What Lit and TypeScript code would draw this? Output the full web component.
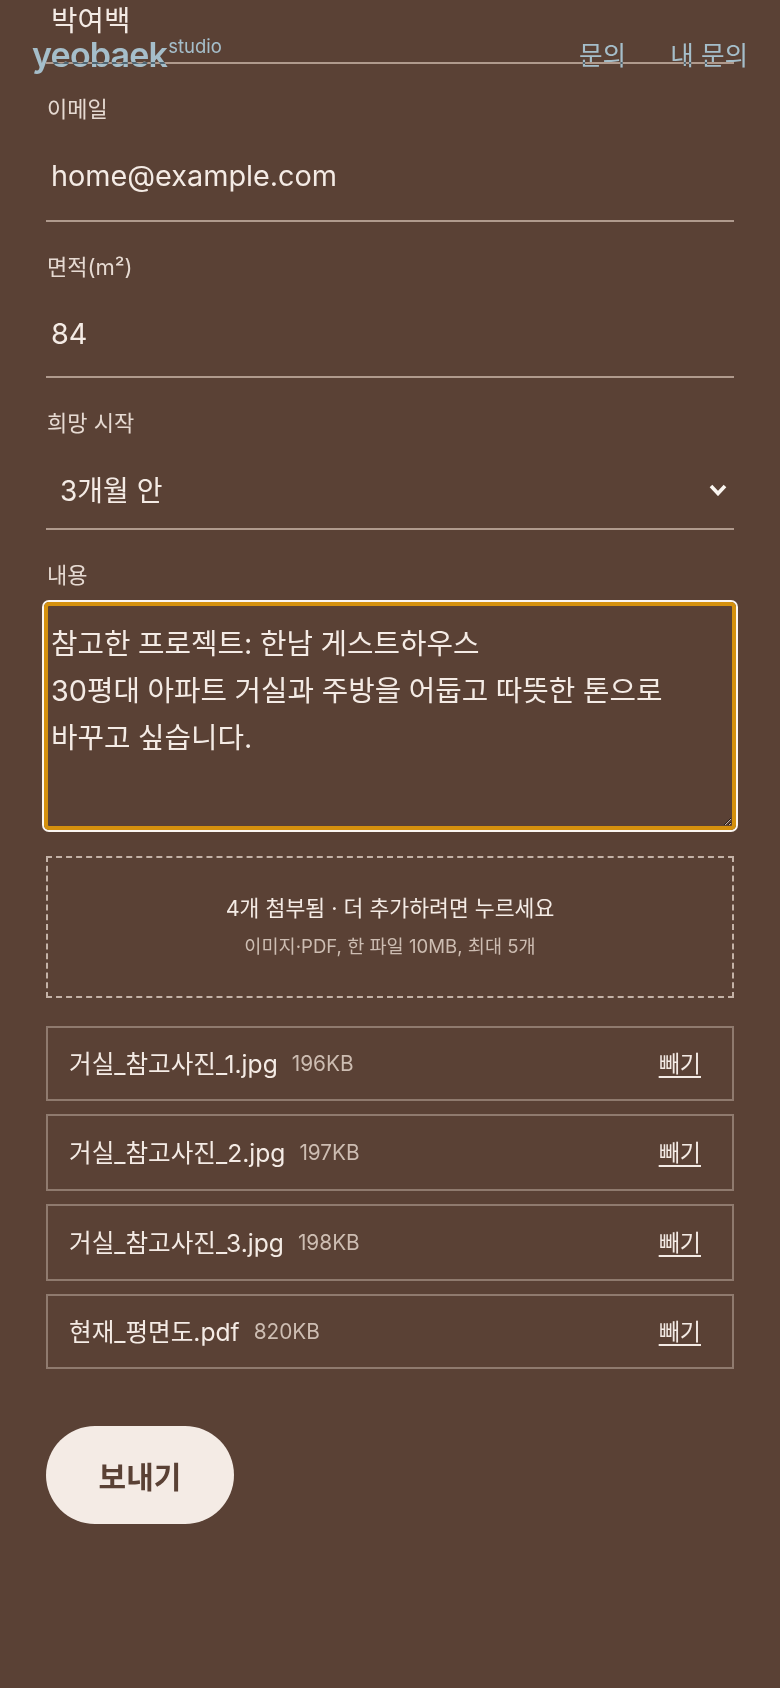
import { LitElement, html, css } from "lit";
import { customElement } from "lit/decorators.js";

const files = [
  { name: "거실_참고사진_1.jpg", size: "196KB", h: 75 },
  { name: "거실_참고사진_2.jpg", size: "197KB", h: 77 },
  { name: "거실_참고사진_3.jpg", size: "198KB", h: 77 },
  { name: "현재_평면도.pdf", size: "820KB", h: 75 },
];

@customElement("app-root")
export class AppRoot extends LitElement {
  static styles = css`
    :host {
      display: block;
      position: relative;
      height: 1688px;
      overflow: hidden;
      background: #5a4135;
      color: #f4ebe5;
      font-family: "Inter", "Noto Sans CJK KR", sans-serif;
    }
    .header {
      position: absolute;
      top: 0;
      left: 0;
      right: 0;
      height: 80px;
      color: #fff;
      mix-blend-mode: difference;
    }
    .logo {
      position: absolute;
      left: 32px;
      top: 33px;
      display: flex;
      align-items: flex-start;
      gap: 1px;
    }
    .mark { font-size: 34px; font-weight: 600; line-height: 44px; letter-spacing: -0.8px; }
    .sub { font-size: 18.5px; line-height: 24px; margin-top: 1px; }
    .nav {
      position: absolute;
      right: 32px;
      top: 39px;
      display: flex;
      gap: 44px;
      font-size: 25.6px;
      line-height: 34px;
    }
    form {
      display: flex;
      flex-direction: column;
      padding: 0 46px;
    }
    .field { display: flex; flex-direction: column; }
    .gap { margin-top: 30px; }
    label { font-size: 22px; line-height: 32px; color: #e6dad2; padding-left: 1px; margin-top: -1px; }
    input, select, textarea {
      font: inherit;
      color: inherit;
      background: transparent;
      border: 0;
      outline: 0;
      margin: 0;
    }
    input, select {
      font-size: 28.8px;
      border-bottom: 2px solid #b09a8d;
      padding: 5px 5px 0;
      width: 100%;
      box-sizing: border-box;
      height: 97px;
    }
    .first input { height: 64px; padding: 0 5px 26px; }
    .short input { height: 95px; padding-top: 7px; }
    .sel { position: relative; }
    select { appearance: none; height: 91px; padding: 14px 14px 0; font-size: 28px; }
    .sel svg { position: absolute; right: 7px; top: 45px; width: 18px; height: 12px; }
    textarea {
      display: block;
      box-sizing: border-box;
      width: 692px;
      height: 228px;
      margin: 11px -2px 0;
      padding: 14px 3px;
      font-size: 28.8px;
      line-height: 47px;
      word-spacing: -0.5px;
      word-break: keep-all;
      border: 4px solid #d4900e;
      border-radius: 5px;
      box-shadow: 0 0 0 2px #fbf6f1;
      resize: vertical;
    }
    .drop {
      margin-top: 26px;
      height: 142px;
      box-sizing: border-box;
      border: 2px dashed #c4b2a7;
      padding-bottom: 3px;
      display: flex;
      flex-direction: column;
      align-items: center;
      justify-content: center;
      gap: 8px;
      font-size: 21.6px;
      line-height: 32px;
    }
    .drop small { font-size: 18.6px; line-height: 28px; color: #cdbdb2; }
    .list { margin-top: 28px; display: flex; flex-direction: column; gap: 13px; }
    .row {
      box-sizing: border-box;
      border: 2px solid #8f7a6e;
      display: flex;
      align-items: center;
      padding: 0 31px 3px 21px;
      font-size: 24.6px;
    }
    .size { font-size: 20.8px; color: #cdbdb2; margin: 3px 0 0 14px; }
    .del { margin-left: auto; font-size: 23px; text-decoration: underline; text-underline-offset: 4px; }
    button {
      margin-top: 57px;
      align-self: flex-start;
      width: 188px;
      height: 98px;
      border: 0;
      border-radius: 49px;
      background: #f4ebe5;
      color: #5a4135;
      font: inherit;
      font-size: 30px;
      font-weight: 600;
    }
  `;

  render() {
    return html`
      <form>
        <div class="field first"><input value="박여백" /></div>
        <div class="field gap">
          <label>이메일</label>
          <input value="home@example.com" />
        </div>
        <div class="field gap short">
          <label>면적(m²)</label>
          <input value="84" />
        </div>
        <div class="field gap">
          <label>희망 시작</label>
          <div class="sel">
            <select><option>3개월 안</option></select>
            <svg viewBox="0 0 18 12" fill="none" stroke="#fbf6f1" stroke-width="3.6"><path d="M2 2 9 9.5 16 2" /></svg>
          </div>
        </div>
        <div class="field gap">
          <label>내용</label>
          <textarea>참고한 프로젝트: 한남 게스트하우스
30평대 아파트 거실과 주방을 어둡고 따뜻한 톤으로 바꾸고 싶습니다.</textarea>
        </div>
        <div class="drop">
          <span>4개 첨부됨 · 더 추가하려면 누르세요</span>
          <small>이미지·PDF, 한 파일 10MB, 최대 5개</small>
        </div>
        <div class="list">
          ${files.map(
            (f) => html`<div class="row" style="height:${f.h}px"><span>${f.name}</span><span class="size">${f.size}</span><span class="del">빼기</span></div>`
          )}
        </div>
        <button type="button">보내기</button>
      </form>
      <div class="header">
        <div class="logo"><span class="mark">yeobaek</span><span class="sub">studio</span></div>
        <div class="nav"><span>문의</span><span>내 문의</span></div>
      </div>
    `;
  }
}
